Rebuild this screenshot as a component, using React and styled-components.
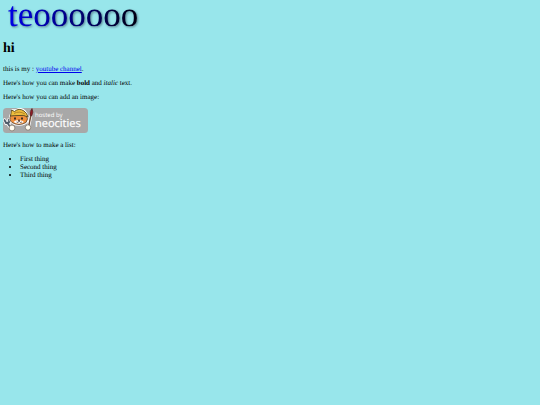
import React from "react";
import styled, { createGlobalStyle } from "styled-components";

const GlobalStyle = createGlobalStyle`
  body {
    margin: 0;
    background: #98e6eb;
    color: #000;
    font: 7px/8px "Liberation Serif", "Times New Roman", serif;
    text-rendering: geometricPrecision;
  }
`;

const Page = styled.main`
  display: flex;
  flex-direction: column;
  align-items: flex-start;
  gap: 6px;
  padding: 0 3px;
`;

const Banner = styled.svg`
  display: block;
  width: 144px;
  height: 35px;
  overflow: visible;
  filter: drop-shadow(1px 1px 1px rgba(40, 60, 80, 0.6));
`;

const Title = styled.h1`
  margin: 0;
  padding-bottom: 2px;
  font-size: 14px;
  line-height: 16px;
`;

const Paragraph = styled.p`
  margin: 0;
`;

const Link = styled.a`
  color: #0000ee;
  text-decoration: underline;
`;

const BadgeFigure = styled.figure`
  margin: 0;
  padding: 1px 0 2px;
`;

const BadgeArt = styled.svg`
  display: block;
  width: 85px;
  height: 25px;
`;

const List = styled.ul`
  margin: 0;
  padding-left: 17px;
`;

function NeocitiesBadge() {
  return (
    <BadgeFigure>
      <BadgeArt viewBox="0 0 85 25" role="img" aria-label="hosted by neocities">
        <rect width="85" height="25" rx="3.5" fill="#a8a8a8" />
        {/* wrench */}
        <path d="M1.5 12l1.5 3 3-.5L6 11.500M4.500 15l4 6" fill="none" stroke="#fff" strokeWidth="3.4" strokeLinecap="round" />
        <path d="M1.5 12l1.5 3 3-.5L6 11.500M4.500 15l4 6" fill="none" stroke="#4f5c6a" strokeWidth="1.8" strokeLinecap="round" />
        {/* brush */}
        <path d="M28.500 4L25.500 19" stroke="#fff" strokeWidth="3" strokeLinecap="round" />
        <path d="M28 7L25.500 19" stroke="#6e4830" strokeWidth="1.400" />
        <path d="M29 0.500Q31 4 28.800 8L27 7.500Q26.500 3 29 0.500Z" fill="#8c1c24" stroke="#44272a" strokeWidth="0.600" />
        {/* cat head */}
        <path d="M7 8L9 2 13 2Q18-1 22 3L24.500 7 25 13Q22 17 16 17Q9 17 7 12Z" fill="#fff" stroke="#fff" strokeWidth="1.500" />
        <path d="M8 7Q5.500 12 9 14.500Q16 18.500 23 14.500Q26 11 23 7Z" fill="#f0903c" stroke="#59402b" strokeWidth="0.800" />
        <path d="M10.500 14Q13 11.500 15.500 12.500Q18 11.500 21 14Q16 17.500 10.500 14Z" fill="#fff" />
        <path d="M7.500 8L8.500 2 11.500 3.500Q16-0.500 21 3Q24 5 25 9Q20 6.500 16 7.500Q12 7.500 7.500 8Z" fill="#edbd3c" stroke="#594721" strokeWidth="0.900" />
        <path d="M11 5.500Q16 2.500 22 6" fill="none" stroke="#a77824" strokeWidth="0.800" />
        <ellipse cx="12" cy="10.500" rx="0.900" ry="1.300" fill="#30251f" />
        <ellipse cx="19" cy="10.500" rx="0.900" ry="1.300" fill="#30251f" />
        <path d="M15 12h2l-1 1zM13.500 14q2 1.500 2.500-1q1 2.500 3 1" fill="none" stroke="#473027" strokeWidth="0.700" />
        {/* paws */}
        <circle cx="9" cy="20" r="2.900" fill="#fffdf2" stroke="#5c4f43" strokeWidth="0.600" />
        <circle cx="25" cy="19.500" r="2.700" fill="#fffdf2" stroke="#5c4f43" strokeWidth="0.600" />
        <g fill="#fff" fontFamily="Open Sans, sans-serif">
          <text x="32" y="9" fontSize="6">hosted by</text>
          <text x="32" y="19" fontSize="11" stroke="#fff" strokeWidth="0.200">neocities</text>
        </g>
      </BadgeArt>
    </BadgeFigure>
  );
}

export default function App() {
  return (
    <>
      <GlobalStyle />
      <Page>
        <Banner viewBox="0 0 144 35" role="img" aria-label="teoooooo">
          <defs>
            <linearGradient id="ink">
              <stop offset="0" stopColor="#0000e8" />
              <stop offset="1" stopColor="#000010" />
            </linearGradient>
          </defs>
          <text x="5" y="26" fontFamily="Liberation Serif, serif" fontSize="35" fill="url(#ink)">teoooooo</text>
        </Banner>
        <Title>hi</Title>
        <Paragraph>this is my : <Link href="#channel">youtube channel</Link>.</Paragraph>
        <Paragraph>Here's how you can make <strong>bold</strong> and <em>italic</em> text.</Paragraph>
        <Paragraph>Here's how you can add an image:</Paragraph>
        <NeocitiesBadge />
        <Paragraph>Here's how to make a list:</Paragraph>
        <List>
          <li>First thing</li>
          <li>Second thing</li>
          <li>Third thing</li>
        </List>
      </Page>
    </>
  );
}
